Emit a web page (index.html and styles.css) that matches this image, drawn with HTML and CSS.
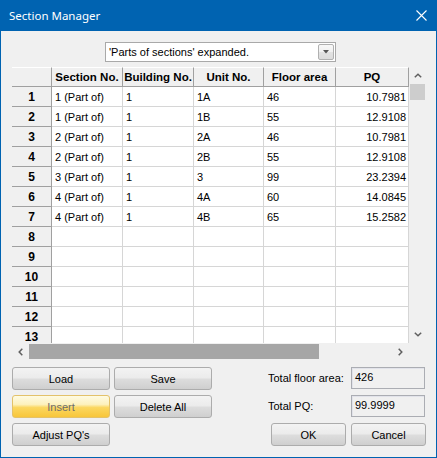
FILE: index.html
```html
<!DOCTYPE html>
<html>
<head>
<meta charset="utf-8">
<link rel="stylesheet" href="styles.css">
</head>
<body>
<div class="window">
  <div class="titlebar">
    <span class="title">Section Manager</span>
    <svg class="close" width="11" height="11" viewBox="0 0 11 11"><path d="M0.5 0.5 L10.5 10.5 M10.5 0.5 L0.5 10.5" stroke="#fff" stroke-width="1.1" fill="none"/></svg>
  </div>
  <div class="client">
    <div class="combo-row">
      <div class="combo">
        <span>'Parts of sections' expanded.</span>
        <div class="combo-btn"><svg width="6" height="4" viewBox="0 0 6 4"><path d="M0 0 H6 L3 3.5 Z" fill="#555"/></svg></div>
      </div>
    </div>
    <div class="grid-area">
      <div class="grid-main">
        <div class="grid-view">
          <div class="row head">
            <div class="rh corner-cell"></div>
            <div class="ch">Section No.</div>
            <div class="ch">Building No.</div>
            <div class="ch">Unit No.</div>
            <div class="ch">Floor area</div>
            <div class="ch">PQ</div>
          </div>
          <div class="row"><div class="rh">1</div><div class="c">1 (Part of)</div><div class="c">1</div><div class="c">1A</div><div class="c">46</div><div class="c num">10.7981</div></div>
          <div class="row"><div class="rh">2</div><div class="c">1 (Part of)</div><div class="c">1</div><div class="c">1B</div><div class="c">55</div><div class="c num">12.9108</div></div>
          <div class="row"><div class="rh">3</div><div class="c">2 (Part of)</div><div class="c">1</div><div class="c">2A</div><div class="c">46</div><div class="c num">10.7981</div></div>
          <div class="row"><div class="rh">4</div><div class="c">2 (Part of)</div><div class="c">1</div><div class="c">2B</div><div class="c">55</div><div class="c num">12.9108</div></div>
          <div class="row"><div class="rh">5</div><div class="c">3 (Part of)</div><div class="c">1</div><div class="c">3</div><div class="c">99</div><div class="c num">23.2394</div></div>
          <div class="row"><div class="rh">6</div><div class="c">4 (Part of)</div><div class="c">1</div><div class="c">4A</div><div class="c">60</div><div class="c num">14.0845</div></div>
          <div class="row"><div class="rh">7</div><div class="c">4 (Part of)</div><div class="c">1</div><div class="c">4B</div><div class="c">65</div><div class="c num">15.2582</div></div>
          <div class="row"><div class="rh">8</div><div class="c"></div><div class="c"></div><div class="c"></div><div class="c"></div><div class="c"></div></div>
          <div class="row"><div class="rh">9</div><div class="c"></div><div class="c"></div><div class="c"></div><div class="c"></div><div class="c"></div></div>
          <div class="row"><div class="rh">10</div><div class="c"></div><div class="c"></div><div class="c"></div><div class="c"></div><div class="c"></div></div>
          <div class="row"><div class="rh">11</div><div class="c"></div><div class="c"></div><div class="c"></div><div class="c"></div><div class="c"></div></div>
          <div class="row"><div class="rh">12</div><div class="c"></div><div class="c"></div><div class="c"></div><div class="c"></div><div class="c"></div></div>
          <div class="row"><div class="rh">13</div><div class="c"></div><div class="c"></div><div class="c"></div><div class="c"></div><div class="c"></div></div>
        </div>
        <div class="vscroll">
          <div class="sbtn"><svg width="8" height="5" viewBox="0 0 8 5"><path d="M0.8 4.3 L4 1.2 L7.2 4.3" stroke="#606060" stroke-width="1.5" fill="none"/></svg></div>
          <div class="vthumb"></div>
          <div class="vtrack"></div>
          <div class="sbtn"><svg width="8" height="5" viewBox="0 0 8 5"><path d="M0.8 0.7 L4 3.8 L7.2 0.7" stroke="#606060" stroke-width="1.5" fill="none"/></svg></div>
        </div>
      </div>
      <div class="hscroll-row">
        <div class="hscroll">
          <div class="sbtn"><svg width="5" height="8" viewBox="0 0 5 8"><path d="M4.3 0.8 L1.2 4 L4.3 7.2" stroke="#606060" stroke-width="1.5" fill="none"/></svg></div>
          <div class="hthumb"></div>
          <div class="htrack"></div>
          <div class="sbtn"><svg width="5" height="8" viewBox="0 0 5 8"><path d="M0.7 0.8 L3.8 4 L0.7 7.2" stroke="#606060" stroke-width="1.5" fill="none"/></svg></div>
        </div>
        <div class="scorner"></div>
      </div>
    </div>
    <div class="bottom">
      <div class="left-buttons">
        <div class="btn">Load</div>
        <div class="btn">Save</div>
        <div class="btn hot">Insert</div>
        <div class="btn">Delete All</div>
        <div class="btn">Adjust PQ's</div>
      </div>
      <div class="right-panel">
        <div class="label">Total floor area:</div>
        <div class="field">426</div>
        <div class="label">Total PQ:</div>
        <div class="field">99.9999</div>
        <div class="dlg-buttons">
          <div class="btn dlg">OK</div>
          <div class="btn dlg">Cancel</div>
        </div>
      </div>
    </div>
  </div>
</div>
</body>
</html>
```
FILE: styles.css
```css
html, body {
  margin: 0;
  padding: 0;
  background: #ffffff;
}

.window {
  width: 437px;
  height: 458px;
  box-sizing: border-box;
  border: 1px solid #0063b1;
  border-top: 0;
  background: #f0f0f0;
  display: flex;
  flex-direction: column;
  font-family: "Liberation Sans", Arial, sans-serif;
  font-size: 11px;
  color: #000;
}

.titlebar {
  height: 31px;
  flex: none;
  background: #0063b1;
  display: flex;
  align-items: center;
  justify-content: space-between;
  padding: 0 9px 0 8px;
  color: #fff;
}

.title {
  font-family: "Noto Sans", "Segoe UI", sans-serif;
  font-size: 11.5px;
}

.close {
  display: block;
}

.client {
  flex: 1;
  padding: 11px 0 0 11px;
}

.combo-row {
  padding-left: 93px;
}

.combo {
  width: 231px;
  height: 20px;
  box-sizing: border-box;
  border: 1px solid #a9a9a9;
  background: #fff;
  display: flex;
  align-items: center;
  justify-content: space-between;
  padding: 0 1px 0 3px;
}

.combo-btn {
  width: 16px;
  height: 16px;
  box-sizing: border-box;
  border: 1px solid #b0b0b0;
  border-radius: 2px;
  background: linear-gradient(#f8f8f8 0%, #f0f0f0 50%, #e2e2e2 51%, #dcdcdc 100%);
  display: flex;
  align-items: center;
  justify-content: center;
}

.combo-btn svg {
  display: block;
}

.grid-area {
  margin-top: 5px;
  width: 414px;
}

.grid-main {
  display: flex;
  height: 276px;
}

.grid-view {
  width: 397px;
  height: 276px;
  overflow: hidden;
  background: #fff;
}

.row {
  display: grid;
  grid-template-columns: 40px 71px 71px 70px 72px 73px;
  height: 20px;
}

.row > div {
  box-sizing: border-box;
  height: 20px;
  white-space: nowrap;
  overflow: hidden;
  display: flex;
  align-items: center;
}

.c {
  border-right: 1px solid #d6d6d6;
  border-bottom: 1px solid #d6d6d6;
  padding-left: 3px;
}

.c.num {
  justify-content: flex-end;
  padding-right: 2px;
  padding-left: 0;
}

.rh {
  background: #f0f0f0;
  border-right: 1px solid #a0a0a0;
  border-bottom: 1px solid #a0a0a0;
  justify-content: center;
  font-weight: bold;
  font-size: 12px;
}

.ch {
  background: #f0f0f0;
  border-top: 1px solid #ffffff;
  border-right: 1px solid #a0a0a0;
  border-bottom: 1px solid #a0a0a0;
  justify-content: center;
  font-weight: bold;
  font-size: 11.5px;
}

.corner-cell {
  border-top: 1px solid #ffffff;
}

.vscroll {
  width: 17px;
  height: 276px;
  background: #f0f0f0;
  display: flex;
  flex-direction: column;
}

.sbtn {
  width: 17px;
  height: 17px;
  flex: none;
  display: flex;
  align-items: center;
  justify-content: center;
}

.sbtn svg {
  display: block;
}

.vthumb {
  height: 16px;
  margin: 0 1px;
  background: #cdcdcd;
  flex: none;
}

.vtrack {
  flex: 1;
}

.hscroll-row {
  display: flex;
  height: 17px;
}

.hscroll {
  width: 397px;
  height: 17px;
  background: #f0f0f0;
  display: flex;
}

.hthumb {
  width: 290px;
  height: 15px;
  margin-top: 1px;
  background: #a6a6a6;
  flex: none;
}

.htrack {
  flex: 1;
}

.scorner {
  width: 17px;
  height: 17px;
  background: #f0f0f0;
}

.bottom {
  margin-top: 7px;
  display: flex;
  gap: 56px;
}

.left-buttons {
  display: grid;
  grid-template-columns: 98px 98px;
  grid-auto-rows: 23px;
  column-gap: 4px;
  row-gap: 5px;
}

.btn {
  height: 23px;
  box-sizing: border-box;
  border: 1px solid #acacac;
  border-radius: 3px;
  background: linear-gradient(#f3f3f3 0%, #ebebeb 48%, #dddddd 52%, #cfcfcf 100%);
  display: flex;
  align-items: center;
  justify-content: center;
  color: #000;
}

.btn.hot {
  border-color: #e3c26a;
  background: linear-gradient(#fefbe3 0%, #fdf1bd 40%, #fbd760 55%, #f8c63a 100%);
  color: #6d6d6d;
}

.right-panel {
  display: grid;
  grid-template-columns: 83px 75px;
  grid-auto-rows: 23px;
  row-gap: 5px;
}

.label {
  display: flex;
  align-items: center;
  height: 22px;
}

.field {
  height: 22px;
  width: 74px;
  box-sizing: border-box;
  border: 1px solid #abadb3;
  box-shadow: inset 1px 1px 0 #e2e3ea;
  background: #f0f0f0;
  padding: 3px 0 0 3px;
}

.dlg-buttons {
  grid-column: 1 / 3;
  display: flex;
  justify-content: flex-end;
  gap: 5px;
}

.btn.dlg {
  width: 75px;
}
```
